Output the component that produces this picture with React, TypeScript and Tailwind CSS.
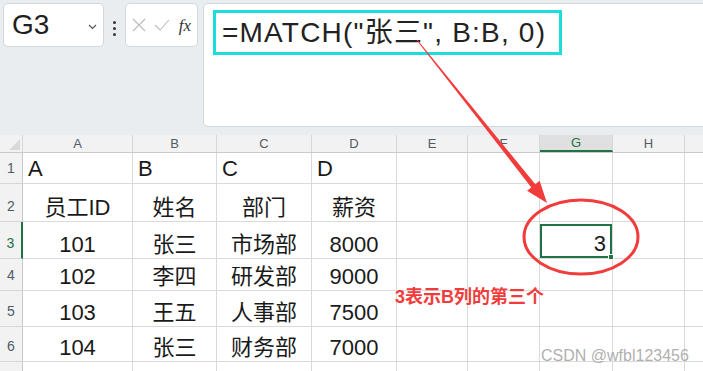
const cols = [110, 84, 95, 85, 71, 72, 73, 72];
const letters = ["A", "B", "C", "D", "E", "F", "G", "H", ""];
const rowHeights = [31, 38, 37, 32, 36, 35, 20];

const data: string[][] = [
  ["A", "B", "C", "D"],
  ["员工ID", "姓名", "部门", "薪资"],
  ["101", "张三", "市场部", "8000"],
  ["102", "李四", "研发部", "9000"],
  ["103", "王五", "人事部", "7500"],
  ["104", "张三", "财务部", "7000"],
  [],
];

const font = { fontFamily: '"Liberation Sans", "Noto Sans CJK SC", sans-serif' };

const NameBox = () => (
  <div className="flex items-center justify-between w-[101px] h-[44px] bg-white border border-[#d3d7db] rounded-[5px] pl-[8px] pr-[6px]">
    <span className="text-[28px] text-[#1f1f1f] leading-none">G3</span>
    <svg width="9" height="6" viewBox="0 0 9 6" className="mt-[4px]">
      <path d="M1 1 L4.5 4.5 L8 1" fill="none" stroke="#555" strokeWidth="1.2" />
    </svg>
  </div>
);

const FxBox = () => (
  <div className="flex items-center justify-between w-[73px] h-[44px] bg-white border border-[#d3d7db] rounded-[5px] px-[6px]">
    <svg width="14" height="14" viewBox="0 0 14 14">
      <path d="M1 1 L13 13 M13 1 L1 13" stroke="#bcbcbc" strokeWidth="1.1" />
    </svg>
    <svg width="16" height="12" viewBox="0 0 16 12">
      <path d="M1 6 L6 11 L15 1" fill="none" stroke="#bcbcbc" strokeWidth="1.1" />
    </svg>
    <span
      className="italic text-[17px] text-[#333] leading-none"
      style={{ fontFamily: '"Liberation Serif", serif' }}
    >
      fx
    </span>
  </div>
);

const Toolbar = () => (
  <div className="flex items-start pt-[3px] pl-[3px] h-[127px]">
    <NameBox />
    <div className="flex flex-col gap-[3px] items-center w-[21px] pt-[18px]">
      <div className="w-[3px] h-[3px] bg-[#333] rounded-full" />
      <div className="w-[3px] h-[3px] bg-[#333] rounded-full" />
      <div className="w-[3px] h-[3px] bg-[#333] rounded-full" />
    </div>
    <FxBox />
    <div className="flex-1 ml-[5px] mr-[-6px] h-[124px] bg-white border border-[#d3d7db] rounded-[5px] pt-[6px] pl-[9px]">
      <div className="inline-flex items-center w-[349px] h-[45px] border-[3px] border-[#1ddcdc] pl-[6px]">
        <span className="text-[28px] tracking-[1.2px] text-[#222] leading-none whitespace-nowrap">
          =MATCH("张三", B:B, 0)
        </span>
      </div>
    </div>
  </div>
);

const Grid = () => (
  <div className="flex flex-col bg-white">
    <div className="flex h-[18px] bg-[#f2f2f2] border-b border-[#c9c9c9]">
      <div className="relative w-[23px] shrink-0 border-r border-[#d6d6d6]">
        <svg width="11" height="11" viewBox="0 0 11 11" className="absolute left-[9px] top-[4px]">
          <path d="M11 0 L11 11 L0 11 Z" fill="#d9d9d9" />
        </svg>
      </div>
      {letters.map((l, i) => (
        <div
          key={i}
          className={
            l === "G"
              ? "flex items-center justify-center shrink-0 bg-[#e0e0e0] border-r border-[#d6d6d6] border-b-2 border-b-[#217346] text-[#217346] text-[13px]"
              : "flex items-center justify-center shrink-0 border-r border-[#d6d6d6] text-[#4f5b66] text-[13px]"
          }
          style={{ width: i < cols.length ? cols[i] : 40 }}
        >
          {l}
        </div>
      ))}
    </div>
    {rowHeights.map((h, r) => (
      <div key={r} className="flex" style={{ height: h }}>
        <div
          className={
            r === 2
              ? "flex items-end justify-center w-[23px] shrink-0 bg-[#f2f2f2] border-r-2 border-[#217346] border-b border-b-[#d6d6d6] text-[14px] text-[#217346] pb-[4px]"
              : "flex items-end justify-center w-[23px] shrink-0 bg-[#f2f2f2] border-r border-[#c9c9c9] border-b border-b-[#d6d6d6] text-[14px] text-[#4f5b66] pb-[4px]"
          }
        >
          {r < 6 ? r + 1 : ""}
        </div>
        {cols.map((w, c) => {
          const v = data[r][c] ?? "";
          const selected = r === 2 && c === 6;
          return (
            <div
              key={c}
              className={
                r === 0
                  ? "flex items-end justify-start shrink-0 border-r border-b border-[#dadada] pl-[5px] pb-[3px] text-[22px] text-[#1a1a1a] leading-none"
                  : "flex items-end justify-center shrink-0 border-r border-b border-[#dadada] pb-[2px] text-[22px] text-[#1a1a1a] leading-none"
              }
              style={{ width: w }}
            >
              {selected ? (
                <div className="relative w-full h-full -mb-[2px] border-2 border-[#217346] flex items-end justify-end pr-[4px] pb-[1px]">
                  3
                  <div className="absolute right-[-4px] bottom-[-4px] w-[6px] h-[6px] bg-[#217346] border border-white" />
                </div>
              ) : (
                v
              )}
            </div>
          );
        })}
        <div className="flex-1 border-b border-[#dadada]" />
      </div>
    ))}
  </div>
);

export default function App() {
  return (
    <div className="relative w-[703px] h-[371px] overflow-hidden bg-[#e9edf0]" style={font}>
      <Toolbar />
      <div className="h-[8px]" />
      <Grid />
      <div className="absolute left-[395px] top-[288px] text-[18px] font-bold text-[#f23c3c] leading-none whitespace-nowrap">
        3表示B列的第三个
      </div>
      <div className="absolute left-[541px] top-[348px] text-[16px] text-[#9a9a9a]/80 leading-none whitespace-nowrap">
        CSDN @wfbl123456
      </div>
      <svg className="absolute left-0 top-0 pointer-events-none" width="703" height="371" viewBox="0 0 703 371">
        <polygon
          points="416.6,40.3 417.4,39.7 535.3,184.2 539.6,180.8 547,203 527,190.8 531.3,187.4"
          fill="#f23c3c"
        />
        <ellipse cx="581" cy="237" rx="57" ry="37" fill="none" stroke="#f23c3c" strokeWidth="3" />
      </svg>
    </div>
  );
}
